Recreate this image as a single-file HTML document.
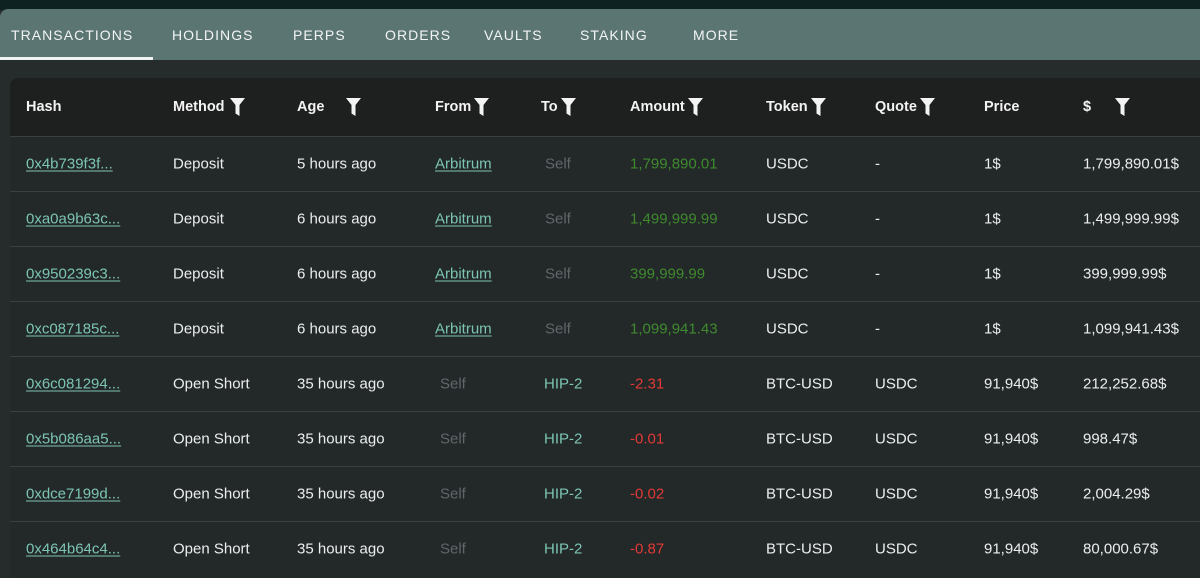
<!DOCTYPE html>
<html><head><meta charset="utf-8"><style>
*{margin:0;padding:0;box-sizing:border-box}
body{width:1200px;height:569px;overflow:hidden;background:#262b2c;font-family:"Liberation Sans",sans-serif;position:relative}
.top{position:absolute;left:0;top:0;width:1200px;height:10px;background:#0d2221}
.tabs{position:absolute;left:0;top:9px;width:1200px;height:51px;background:#5b7572;border-top-left-radius:8px}
.tab{position:absolute;top:26px;transform:translateY(-50%);color:#f2f5f4;font-size:14px;letter-spacing:1.05px}
.ul{position:absolute;left:0;top:57px;width:153px;height:3px;background:#f0f2f2}
.panel{position:absolute;left:10px;top:78px;width:1200px;height:500px;background:#232829;border-top-left-radius:9px;overflow:hidden}
.head{position:absolute;left:0;top:0;width:1200px;height:58px;background:#1e1f1f}
.t{position:absolute;font-size:15px;color:#eceeee;white-space:nowrap;transform:translateY(-50%)}
.h{font-weight:bold;color:#f3f3f3;font-size:14.5px}
.sep{position:absolute;left:0;width:1200px;height:1px;background:#3a3f40}
.lnk{color:#7cc5b2;text-decoration:underline;text-underline-offset:2px}
.g{color:#3f8a2e}.r{color:#e23a36}.s{color:#60676a}.tl{color:#7cc5b2}
svg{position:absolute}
</style></head><body>
<div class="top"></div>
<div class="tabs">
<span class="tab" style="left:11px">TRANSACTIONS</span>
<span class="tab" style="left:172px">HOLDINGS</span>
<span class="tab" style="left:293px">PERPS</span>
<span class="tab" style="left:385px">ORDERS</span>
<span class="tab" style="left:484px">VAULTS</span>
<span class="tab" style="left:580px">STAKING</span>
<span class="tab" style="left:693px">MORE</span>
</div>
<div class="ul"></div>
<div class="panel">
<div class="head"></div>
<div id="c"></div>
</div>
<script>
var P=document.querySelector('.panel'),h='';
var cols=[16,163,287,425,531,620,756,865,974,1073];
var hd=['Hash','Method','Age','From','To','Amount','Token','Quote','Price','$'];
var fx=[null,220,336,464,551,678,801,910,null,1105];
for(var i=0;i<10;i++){h+='<span class="t h" style="left:'+cols[i]+'px;top:29px">'+hd[i]+'</span>';
if(fx[i])h+='<svg style="left:'+fx[i]+'px;top:20px" width="15" height="18" viewBox="0 0 15 18"><path d="M0 0H15L9.5 7V18L5.5 15.5V7Z" fill="#f3f3f3"/></svg>';}
var rows=[
['0x4b739f3f...','Deposit','5 hours ago','A','Self','1,799,890.01','g','USDC','-','1$','1,799,890.01$'],
['0xa0a9b63c...','Deposit','6 hours ago','A','Self','1,499,999.99','g','USDC','-','1$','1,499,999.99$'],
['0x950239c3...','Deposit','6 hours ago','A','Self','399,999.99','g','USDC','-','1$','399,999.99$'],
['0xc087185c...','Deposit','6 hours ago','A','Self','1,099,941.43','g','USDC','-','1$','1,099,941.43$'],
['0x6c081294...','Open Short','35 hours ago','S','HIP-2','-2.31','r','BTC-USD','USDC','91,940$','212,252.68$'],
['0x5b086aa5...','Open Short','35 hours ago','S','HIP-2','-0.01','r','BTC-USD','USDC','91,940$','998.47$'],
['0xdce7199d...','Open Short','35 hours ago','S','HIP-2','-0.02','r','BTC-USD','USDC','91,940$','2,004.29$'],
['0x464b64c4...','Open Short','35 hours ago','S','HIP-2','-0.87','r','BTC-USD','USDC','91,940$','80,000.67$']];
rows.forEach(function(r,k){var y=58+k*55,cy=y+28;
h+='<div class="sep" style="top:'+y+'px"></div>';
h+='<span class="t lnk" style="left:16px;top:'+cy+'px">'+r[0]+'</span>';
h+='<span class="t" style="left:163px;top:'+cy+'px">'+r[1]+'</span>';
h+='<span class="t" style="left:287px;top:'+cy+'px">'+r[2]+'</span>';
if(r[3]=='A'){h+='<span class="t lnk" style="left:425px;top:'+cy+'px">Arbitrum</span><span class="t s" style="left:535px;top:'+cy+'px">Self</span>';}
else{h+='<span class="t s" style="left:430px;top:'+cy+'px">Self</span><span class="t tl" style="left:534px;top:'+cy+'px">HIP-2</span>';}
h+='<span class="t '+r[6]+'" style="left:620px;top:'+cy+'px">'+r[5]+'</span>';
h+='<span class="t" style="left:756px;top:'+cy+'px">'+r[7]+'</span>';
h+='<span class="t" style="left:865px;top:'+cy+'px">'+r[8]+'</span>';
h+='<span class="t" style="left:974px;top:'+cy+'px">'+r[9]+'</span>';
h+='<span class="t" style="left:1073px;top:'+cy+'px">'+r[10]+'</span>';});
document.getElementById('c').innerHTML=h;
</script>
</body></html>
